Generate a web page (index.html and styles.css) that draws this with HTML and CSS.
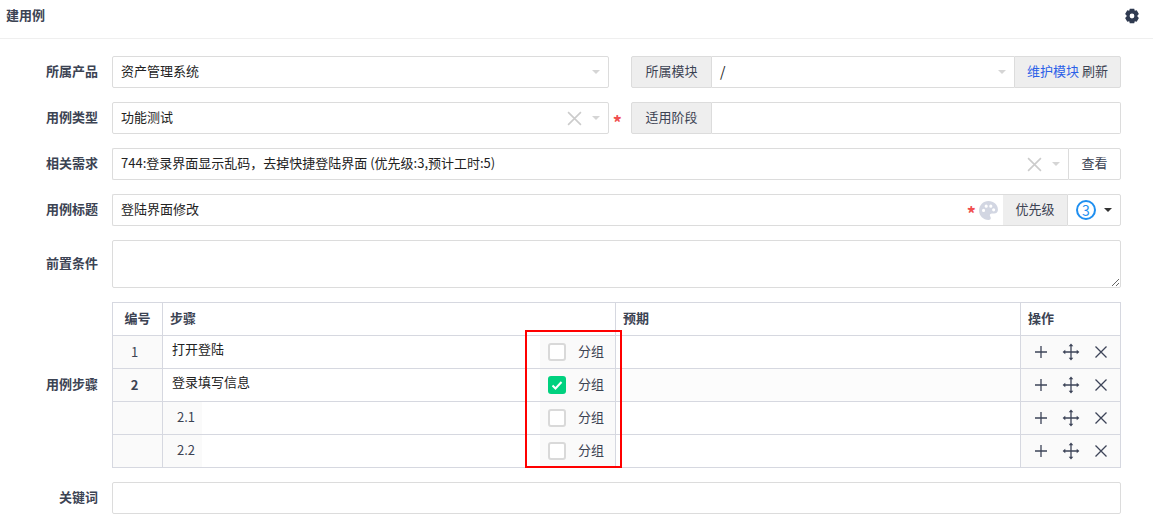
FILE: index.html
```html
<!DOCTYPE html>
<html lang="zh">
<head>
<meta charset="utf-8">
<title>建用例</title>
<link rel="stylesheet" href="styles.css">
</head>
<body>
<header class="head">
  <h1 class="title">建用例</h1>
  <svg class="gear" viewBox="0 0 16 16"><path fill-rule="evenodd" d="M5.800.8h4.400l.6 2 1.900-.5 2.200 3.800-1.500 1.500.1.400-.1.400 1.500 1.500-2.200 3.800-1.900-.5-.6 2H5.800l-.6-2-1.900.5L1.100 9.900l1.500-1.500-.1-.4.100-.4L1.100 6.100l2.200-3.800 1.900.5zM8 5.600a2.400 2.400 0 1 0 0 4.800 2.400 2.400 0 0 0 0-4.800z"/></svg>
</header>
<main class="form">
  <div class="row">
    <label class="label">所属产品</label>
    <div class="split">
      <div class="box left-col"><span class="val">资产管理系统</span><i class="caret"></i></div>
      <div class="joined right-col">
        <span class="addon">所属模块</span>
        <div class="box grow mid"><span class="val slash">/</span><i class="caret"></i></div>
        <span class="addon tail"><a class="link">维护模块</a> 刷新</span>
      </div>
    </div>
  </div>
  <div class="row">
    <label class="label">用例类型</label>
    <div class="split">
      <div class="box left-col"><span class="val">功能测试</span><svg class="clear" viewBox="0 0 14 14"><path d="M1 1l12 12M13 1L1 13"/></svg><i class="caret"></i><b class="star outside">*</b></div>
      <div class="joined right-col">
        <span class="addon">适用阶段</span>
        <div class="box grow mid end"></div>
      </div>
    </div>
  </div>
  <div class="row">
    <label class="label">相关需求</label>
    <div class="joined full">
      <div class="box grow start"><span class="val">744:登录界面显示乱码，去掉快捷登陆界面 (优先级:3,预计工时:5)</span><svg class="clear" viewBox="0 0 14 14"><path d="M1 1l12 12M13 1L1 13"/></svg><i class="caret"></i></div>
      <span class="addon plain tail">查看</span>
    </div>
  </div>
  <div class="row">
    <label class="label">用例标题</label>
    <div class="joined full">
      <div class="box grow start"><span class="val">登陆界面修改</span><b class="star">*</b><svg class="palette" viewBox="0 0 20 20"><path fill-rule="evenodd" d="M10 1C5 1 1 5 1 10s4 9 9 9c1.500 0 2.200-.9 2.200-1.900 0-.6-.3-1-.5-1.400-.3-.4-.4-.8-.4-1.200 0-1 .8-1.700 1.800-1.700h2.200c2.400 0 3.700-1.600 3.700-3.600C19 4.400 15 1 10 1zM5.300 11.400a1.500 1.500 0 1 1 0-3 1.500 1.500 0 0 1 0 3zm2.500-4a1.500 1.500 0 1 1 0-3 1.500 1.500 0 0 1 0 3zm4.400 0a1.500 1.500 0 1 1 0-3 1.500 1.500 0 0 1 0 3zm2.700 3.500a1.500 1.500 0 1 1 0-3 1.500 1.500 0 0 1 0 3z"/></svg></div>
      <span class="addon prio">优先级</span>
      <div class="box pick end"><span class="pri">3</span><i class="caret dark"></i></div>
    </div>
  </div>
  <div class="row area-row">
    <label class="label">前置条件</label>
    <textarea class="area"></textarea>
  </div>
  <div class="row table-row">
    <label class="label">用例步骤</label>
    <div class="table-wrap">
      <table class="steps">
        <thead>
          <tr><th class="c-no">编号</th><th class="c-step">步骤</th><th class="c-exp">预期</th><th class="c-op">操作</th></tr>
        </thead>
        <tbody>
          <tr>
            <td class="no">1</td>
            <td class="step"><div class="step-in"><span class="step-text">打开登陆</span><span class="grp"><i class="check"></i><span>分组</span></span></div></td>
            <td></td>
            <td class="ops"><div class="ops-in"><svg viewBox="0 0 16 16"><use href="#i-plus"/></svg><svg viewBox="0 0 16 16"><use href="#i-move"/></svg><svg viewBox="0 0 16 16"><use href="#i-x"/></svg></div></td>
          </tr>
          <tr class="group-row">
            <td class="no strong">2</td>
            <td class="step"><div class="step-in"><span class="step-text">登录填写信息</span><span class="grp"><i class="check on"><svg viewBox="0 0 18 18"><path d="M4.500 9.500l3 3 6-6.500"/></svg></i><span>分组</span></span></div></td>
            <td></td>
            <td class="ops"><div class="ops-in"><svg viewBox="0 0 16 16"><use href="#i-plus"/></svg><svg viewBox="0 0 16 16"><use href="#i-move"/></svg><svg viewBox="0 0 16 16"><use href="#i-x"/></svg></div></td>
          </tr>
          <tr>
            <td class="no"></td>
            <td class="step"><div class="step-in"><span class="sub">2.1</span><span class="grp"><i class="check"></i><span>分组</span></span></div></td>
            <td></td>
            <td class="ops"><div class="ops-in"><svg viewBox="0 0 16 16"><use href="#i-plus"/></svg><svg viewBox="0 0 16 16"><use href="#i-move"/></svg><svg viewBox="0 0 16 16"><use href="#i-x"/></svg></div></td>
          </tr>
          <tr>
            <td class="no"></td>
            <td class="step"><div class="step-in"><span class="sub">2.2</span><span class="grp"><i class="check"></i><span>分组</span></span></div></td>
            <td></td>
            <td class="ops"><div class="ops-in"><svg viewBox="0 0 16 16"><use href="#i-plus"/></svg><svg viewBox="0 0 16 16"><use href="#i-move"/></svg><svg viewBox="0 0 16 16"><use href="#i-x"/></svg></div></td>
          </tr>
        </tbody>
      </table>
      <div class="mark"></div>
    </div>
  </div>
  <div class="row">
    <label class="label">关键词</label>
    <div class="box grow"></div>
  </div>
</main>
<svg class="defs" aria-hidden="true">
  <defs>
    <g id="i-plus"><path class="ln" d="M8 2v12M2 8h12"/></g>
    <g id="i-x"><path class="ln" d="M2.500 2.500l11 11M13.500 2.500l-11 11"/></g>
    <g id="i-move"><path class="ln" d="M8 1v14M1 8h14"/><path class="hd" d="M8 -.4l2.300 2.700h-4.600zM8 16.400l2.300-2.700h-4.600zM-.4 8l2.700-2.300v4.600zM16.400 8l-2.700-2.300v4.600z"/></g>
  </defs>
</svg>
</body>
</html>
```
FILE: styles.css
```css
* { box-sizing: border-box; }
html, body { margin: 0; padding: 0; }
body {
  width: 1153px;
  height: 527px;
  overflow: hidden;
  background: #fff;
  color: #313c52;
  font: 13px/18px "Noto Sans CJK SC", "Noto Sans", sans-serif;
}
.head {
  display: flex;
  align-items: center;
  justify-content: space-between;
  height: 39px;
  padding: 0 13px 7px 6px;
  border-bottom: 1px solid #efefef;
}
.title { margin: 0 0 2px; font-size: 13px; font-weight: 700; line-height: 18px; color: #3c4353; }
.gear { width: 16px; height: 16px; fill: #2f3a50; }
.form { display: flex; flex-direction: column; gap: 14px; padding: 17px 32px 0 0; }
.row { display: flex; align-items: center; min-height: 32px; }
.label {
  flex: none;
  width: 98px;
  margin-right: 14px;
  padding-bottom: 2px;
  text-align: right;
  font-weight: 700;
  color: #3c4353;
}
.split { flex: 1; display: flex; gap: 22px; }
.right-col { flex: 1; }
.joined { display: flex; }
.full { flex: 1; }
.box {
  position: relative;
  display: flex;
  align-items: center;
  height: 32px;
  padding: 0 8px;
  background: #fff;
  border: 1px solid #dcdcdc;
  border-radius: 2px;
  color: #222;
}
.grow { flex: 1; min-width: 0; }
.left-col { flex: none; width: 497px; }
.val { flex: 1; padding-bottom: 2px; white-space: nowrap; }
.slash { color: #222; font-size: 14px; }
.mid { border-radius: 0; border-left: 0; border-right: 0; }
.mid.end { border-right: 1px solid #dcdcdc; border-radius: 0 2px 2px 0; }
.start { border-radius: 2px 0 0 2px; border-right: 0; }
.end { border-radius: 0 2px 2px 0; }
.addon {
  flex: none;
  display: flex;
  align-items: center;
  justify-content: center;
  height: 32px;
  width: 81px;
  padding-bottom: 2px;
  background: #eee;
  border: 1px solid #dcdcdc;
  border-radius: 2px 0 0 2px;
  color: #3c4353;
  white-space: pre;
}
.addon.tail { width: 107px; border-radius: 0 2px 2px 0; }
.addon.plain { width: 53px; background: #fff; }
.addon.prio { width: 64px; border-width: 1px 0; border-radius: 0; }
.link { color: #2b60e8; }
.caret {
  flex: none;
  width: 0;
  height: 0;
  margin-left: 8px;
  margin-right: 0;
  border-left: 4px solid transparent;
  border-right: 4px solid transparent;
  border-top: 4px solid #d5d5d5;
}
.caret.dark { border-top-color: #333; margin: 0; border-width: 4px 4px 0; }
.clear { flex: none; width: 15px; height: 15px; margin-right: 2px; fill: none; stroke: #ccc; stroke-width: 1.500; }
.star {
  height: 10px;
  margin-right: 2px;
  color: #f04f4f;
  font-weight: 700;
  font-size: 18px;
  line-height: 16px;
}
.star.outside { position: absolute; right: -14px; top: 11px; margin: 0; }
.palette { flex: none; width: 21px; height: 21px; margin-right: -4px; fill: #d2d6e2; }
.pick { flex: none; width: 54px; padding: 0 0 0 8px; gap: 8px; border-left: 1px solid #dcdcdc; }
.pri {
  display: flex;
  align-items: center;
  justify-content: center;
  width: 20px;
  height: 20px;
  border: 2px solid #1f8ff0;
  border-radius: 50%;
  color: #1f8ff0;
  font-size: 14px;
  line-height: 1;
}
.area {
  display: block;
  flex: 1;
  height: 48px;
  margin: 0;
  padding: 6px 8px;
  border: 1px solid #dcdcdc;
  border-radius: 2px;
  font: inherit;
  background: #fff;
}
.table-wrap { position: relative; flex: 1; }
.steps {
  width: 1008px;
  table-layout: fixed;
  border-collapse: collapse;
  border: 1px solid #d6d8e0;
}
.steps th, .steps td { height: 33px; padding: 0; border: 1px solid #d6d8e0; }
.steps th { text-align: left; padding: 0 7px 2px; font-weight: 700; color: #3c4353; background: #fff; }
.steps th.c-no { text-align: center; padding: 0 0 2px; }
.c-no { width: 50px; }
.c-step { width: 453px; }
.c-exp { width: 405px; }
.c-op { width: 100px; }
.no { padding-right: 6px !important; text-align: center; background: #fafafa; color: #3c4353; }
.no.strong { font-weight: 700; }
.group-row td:nth-child(3) { background: #fcfcfc; }
.step-in { display: flex; align-items: stretch; height: 32px; }
.step-text { flex: 1; padding: 4px 0 0 9px; color: #222; }
.sub { padding: 6px 8px 0 14px; background: #fafafa; color: #3c4353; width: 39px; margin-right: auto; }
.grp {
  flex: none;
  display: flex;
  align-items: center;
  width: 75px;
  padding: 0 0 2px 8px;
  gap: 12px;
  background: #fafafa;
  color: #3c4353;
}
.check {
  display: block;
  width: 18px;
  height: 18px;
  margin-top: 2px;
  background: #fff;
  border: 2px solid #d9d9d9;
  border-radius: 3px;
}
.check.on { background: #00d17f; border: 0; }
.check svg { display: block; width: 18px; height: 18px; fill: none; stroke: #fff; stroke-width: 2; }
.ops { background: #fafafa; }
.ops-in { display: flex; justify-content: center; align-items: center; gap: 14px; }
.ops-in svg { width: 16px; height: 16px; overflow: visible; }
.ln { fill: none; stroke: #3d4458; stroke-width: 1.300; }
.hd { fill: #3d4458; }
.mark {
  position: absolute;
  left: 413px;
  top: 28px;
  width: 97px;
  height: 138px;
  border: 2px solid #ff0000;
  pointer-events: none;
}
.defs { position: absolute; width: 0; height: 0; }
```
